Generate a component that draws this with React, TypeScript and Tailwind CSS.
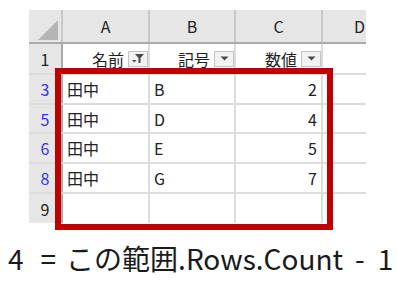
import React from "react";

const jp = { fontFamily: '"Noto Sans CJK JP", "Noto Sans", sans-serif' };

function DropButton({ filtered }: { filtered?: boolean }) {
  return (
    <div className="w-[20px] h-[16px] border border-[#c4c4c4] bg-[#f2f2f2] flex items-center justify-center shrink-0">
      {filtered ? (
        <svg width="13" height="11" viewBox="0 0 13 11">
          <path d="M3 1h9L8.5 5v5h-2V5z" fill="#4a4a4a" />
          <path d="M0 7h4.5L2.25 9.5z" fill="#4a4a4a" />
        </svg>
      ) : (
        <svg width="9" height="5" viewBox="0 0 9 5">
          <path d="M0.5 0.5h8L4.5 4.5z" fill="#4a4a4a" />
        </svg>
      )}
    </div>
  );
}

const rows = [
  { n: "3", blue: true, h: "h-[30px]", a: "田中", b: "B", c: "2" },
  { n: "5", blue: true, h: "h-[29px]", a: "田中", b: "D", c: "4" },
  { n: "6", blue: true, h: "h-[30px]", a: "田中", b: "E", c: "5" },
  { n: "8", blue: true, h: "h-[30px]", a: "田中", b: "G", c: "7" },
  { n: "9", blue: false, h: "h-[29px]", a: "", b: "", c: "" },
];

export default function App() {
  return (
    <div className="w-[397px] h-[289px] bg-white relative overflow-hidden" style={jp}>
      <div className="ml-[29px] mt-[10px] w-[337px] text-[#222]">
        {/* column headers */}
        <div className="flex h-[34px] bg-[#e6e6e6] border-b-2 border-[#ababab]">
          <div className="w-[34px] border-r-2 border-[#c8c8c8] relative">
            <svg className="absolute left-[9px] top-[10px]" width="20" height="20" viewBox="0 0 20 20">
              <path d="M20 0V20H0z" fill="#b5b5b5" />
            </svg>
          </div>
          {["A", "B", "C"].map((c, i) => (
            <div
              key={c}
              className={`flex items-center justify-center text-[16px] border-r-2 border-[#c8c8c8] ${i === 1 ? "w-[86px]" : "w-[87px]"}`}
            >
              {c}
            </div>
          ))}
          <div className="flex-1 flex items-center pl-[31px] text-[16px] overflow-hidden">D</div>
        </div>

        {/* row 1: field names with filter buttons */}
        <div className="flex h-[31px] border-b-2 border-[#dcdcdc]">
          <div className="w-[34px] bg-[#e6e6e6] border-r-2 border-[#ababab] flex items-center justify-center text-[16px]">
            1
          </div>
          <div className="w-[87px] border-r-2 border-[#dcdcdc] flex items-center justify-end gap-[4px] text-[16px]">
            <span>名前</span>
            <DropButton filtered />
          </div>
          <div className="w-[86px] border-r-2 border-[#dcdcdc] flex items-center justify-end gap-[4px] text-[16px]">
            <span>記号</span>
            <DropButton />
          </div>
          <div className="w-[87px] border-r-2 border-[#dcdcdc] flex items-center justify-end gap-[4px] text-[16px]">
            <span>数値</span>
            <DropButton />
          </div>
          <div className="flex-1" />
        </div>

        {rows.map((r, idx) => (
          <div
            key={r.n}
            className={`flex ${r.h} ${idx < rows.length - 1 ? "border-b-2 border-[#dcdcdc]" : ""}`}
          >
            <div
              className={`w-[34px] bg-[#e6e6e6] border-r-2 border-[#ababab] flex items-center justify-center text-[16px] ${r.blue ? "text-[#3333ee]" : "text-[#222]"}`}
            >
              {r.n}
            </div>
            <div className="w-[87px] border-r-2 border-[#dcdcdc] flex items-center pl-[4px] text-[16px]">{r.a}</div>
            <div className="w-[86px] border-r-2 border-[#dcdcdc] flex items-center pl-[4px] text-[16px]">{r.b}</div>
            <div className="w-[87px] border-r-2 border-[#dcdcdc] flex items-center justify-end pr-[4px] text-[16px]">{r.c}</div>
            <div className="flex-1" />
          </div>
        ))}
      </div>

      {/* highlighted range */}
      <div className="absolute left-[55px] top-[68px] w-[278px] h-[162px] border-[6px] border-[#c00000]" />

      <div className="mt-[21px] ml-[8px] flex items-baseline text-[28px] leading-none text-[#1a1a1a] whitespace-nowrap">
        <span>4</span>
        <span className="ml-[17px] mr-[10px]">=</span>
        <span>この範囲.Rows.Count</span>
        <span className="ml-[12px]">-</span>
        <span className="ml-[13px]">1</span>
      </div>
    </div>
  );
}
